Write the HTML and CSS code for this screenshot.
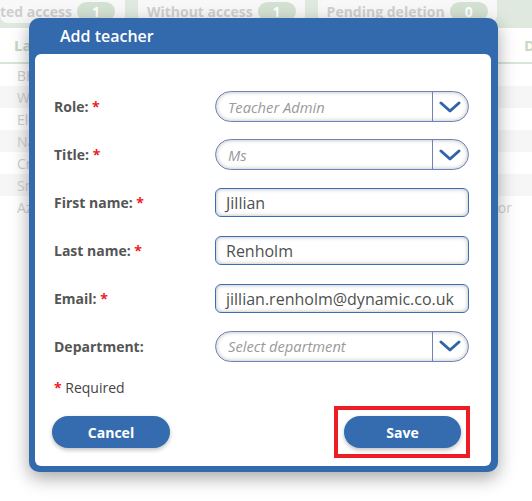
FILE: index.html
```html
<!DOCTYPE html>
<html lang="en">
<head>
<meta charset="utf-8">
<title>Add teacher</title>
<link rel="stylesheet" href="styles.css">
</head>
<body>
<div class="page">
  <div class="tabbar">
    <div class="tab tab-first"><span class="tab-label">ted access</span><span class="badge">1</span></div>
    <div class="tab"><span class="tab-label">Without access</span><span class="badge">1</span></div>
    <div class="tab"><span class="tab-label">Pending deletion</span><span class="badge">0</span></div>
  </div>
  <div class="table">
    <div class="thead"><span class="th">Last name</span><span class="th th-right">D</span></div>
    <div class="tr"><span>BH</span></div>
    <div class="tr alt"><span>Wood</span></div>
    <div class="tr"><span>Eldon</span></div>
    <div class="tr alt"><span>Nash</span></div>
    <div class="tr"><span>Crane</span></div>
    <div class="tr alt"><span>Smith</span></div>
    <div class="tr"><span>Azure</span><span class="td-right">Administrator</span></div>
  </div>
</div>

<div class="modal">
  <div class="modal-title">Add teacher</div>
  <div class="modal-body">
    <div class="form">
      <div class="row">
        <label class="label">Role: <span class="req">*</span></label>
        <div class="select"><span class="placeholder">Teacher Admin</span><span class="select-btn"><svg width="22" height="12" viewBox="0 0 22 12"><polyline points="2,2 11,10 20,2" fill="none" stroke="#2f66a8" stroke-width="3" stroke-linecap="round" stroke-linejoin="round"/></svg></span></div>
      </div>
      <div class="row">
        <label class="label">Title: <span class="req">*</span></label>
        <div class="select"><span class="placeholder">Ms</span><span class="select-btn"><svg width="22" height="12" viewBox="0 0 22 12"><polyline points="2,2 11,10 20,2" fill="none" stroke="#2f66a8" stroke-width="3" stroke-linecap="round" stroke-linejoin="round"/></svg></span></div>
      </div>
      <div class="row">
        <label class="label">First name: <span class="req">*</span></label>
        <div class="input">Jillian</div>
      </div>
      <div class="row">
        <label class="label">Last name: <span class="req">*</span></label>
        <div class="input">Renholm</div>
      </div>
      <div class="row">
        <label class="label">Email: <span class="req">*</span></label>
        <div class="input">jillian.renholm@dynamic.co.uk</div>
      </div>
      <div class="row">
        <label class="label">Department:</label>
        <div class="select"><span class="placeholder">Select department</span><span class="select-btn"><svg width="22" height="12" viewBox="0 0 22 12"><polyline points="2,2 11,10 20,2" fill="none" stroke="#2f66a8" stroke-width="3" stroke-linecap="round" stroke-linejoin="round"/></svg></span></div>
      </div>
    </div>
    <div class="required"><span class="req">*</span> Required</div>
    <div class="footer">
      <button class="btn">Cancel</button>
      <div class="highlight"><button class="btn">Save</button></div>
    </div>
  </div>
</div>
</body>
</html>
```
FILE: styles.css
```css
* { box-sizing: border-box; }
html, body { margin: 0; padding: 0; }
body {
  width: 532px;
  height: 501px;
  overflow: hidden;
  background: #ffffff;
  font-family: "Open Sans", "Liberation Sans", sans-serif;
  position: relative;
}
.page { width: 532px; }
.tabbar {
  display: flex;
  gap: 13px;
  height: 28px;
  background: #dfe9df;
  white-space: nowrap;
}
.tab {
  flex: none;
  display: flex;
  align-items: center;
  gap: 5px;
  height: 23px;
  padding: 0 9px;
  background: #f8f8f8;
  border-radius: 0 0 8px 8px;
  color: #cfcfcf;
  font-weight: 700;
  font-size: 14px;
}
.tab-first { padding-left: 0; padding-right: 10px; }
.tab-label { white-space: nowrap; }
.badge {
  flex: none;
  display: inline-flex;
  align-items: center;
  justify-content: center;
  width: 38px;
  height: 19px;
  border-radius: 10px;
  background: #d3e1d3;
  color: #ffffff;
  font-size: 14px;
}
.thead {
  display: flex;
  justify-content: space-between;
  align-items: center;
  height: 36px;
  padding: 0 0 0 14px;
  border-bottom: 2px solid #d8e5d8;
  color: #c6d8c6;
  font-weight: 700;
  font-size: 15px;
}
.th-right { width: 8px; overflow: hidden; }
.tr {
  display: flex;
  justify-content: space-between;
  align-items: center;
  height: 22px;
  padding: 0 20px 0 17px;
  color: #d0d0d0;
  font-size: 14px;
}
.tr.alt { background: #f5f6f5; }
.td-right { color: #d0d0d0; }

.modal {
  position: absolute;
  left: 29px;
  top: 18px;
  width: 469px;
  height: 454px;
  background: #3369ad;
  border-radius: 10px;
  padding: 0 7px 6px 6px;
  display: flex;
  flex-direction: column;
  box-shadow: 0 6px 18px rgba(0, 0, 0, 0.35);
}
.modal-title {
  height: 36px;
  padding-left: 25px;
  display: flex;
  align-items: center;
  color: #ffffff;
  font-size: 16px;
  font-weight: 600;
}
.modal-body {
  flex: 1;
  background: #ffffff;
  border-radius: 6px;
  padding: 29px 0 7px 0;
  display: flex;
  flex-direction: column;
}
.form { display: flex; flex-direction: column; padding: 0 22px 0 19px; }
.row {
  display: flex;
  align-items: center;
  height: 47.9px;
}
.label {
  width: 161px;
  flex: none;
  color: #555555;
  font-weight: 700;
  font-size: 14px;
}
.req { color: #ee1c24; font-weight: 700; }
.select {
  flex: 1;
  height: 31px;
  display: flex;
  align-items: stretch;
  border: 1px solid #7082bd;
  border-radius: 16px;
  box-shadow: inset 0 0 4px rgba(0, 0, 0, 0.3);
  background: #ffffff;
  overflow: hidden;
}
.placeholder {
  flex: 1;
  display: flex;
  align-items: center;
  padding-left: 12px;
  font-style: italic;
  font-size: 14.7px;
  color: #9a9a9a;
}
.select-btn {
  width: 36px;
  flex: none;
  border-left: 1px solid #7082bd;
  display: flex;
  align-items: center;
  justify-content: center;
  padding-right: 2px;
}
.input {
  flex: 1;
  height: 29px;
  border: 1.5px solid #3b6fb3;
  border-radius: 6px;
  box-shadow: inset 0 0 4px rgba(0, 0, 0, 0.3);
  display: flex;
  align-items: center;
  padding-left: 10px;
  font-size: 16px;
  color: #505050;
}
.required {
  margin-top: 8px;
  padding-left: 19px;
  font-size: 14px;
  line-height: 20px;
  color: #444444;
}
.footer {
  margin-top: 8px;
  display: flex;
  justify-content: space-between;
  align-items: center;
  padding: 0 21px 0 17px;
}
.btn {
  width: 118px;
  height: 32px;
  border: none;
  border-radius: 16px;
  background: #356cb0;
  color: #ffffff;
  font-family: "Open Sans", "Liberation Sans", sans-serif;
  font-weight: 700;
  font-size: 14px;
  box-shadow: 0 2px 4px rgba(0, 0, 0, 0.25);
  padding: 0;
}
.highlight {
  border: 4px solid #ee1c24;
  padding: 6px 5px 6px 6px;
}
.highlight .btn { width: 117px; display: block; }
```
